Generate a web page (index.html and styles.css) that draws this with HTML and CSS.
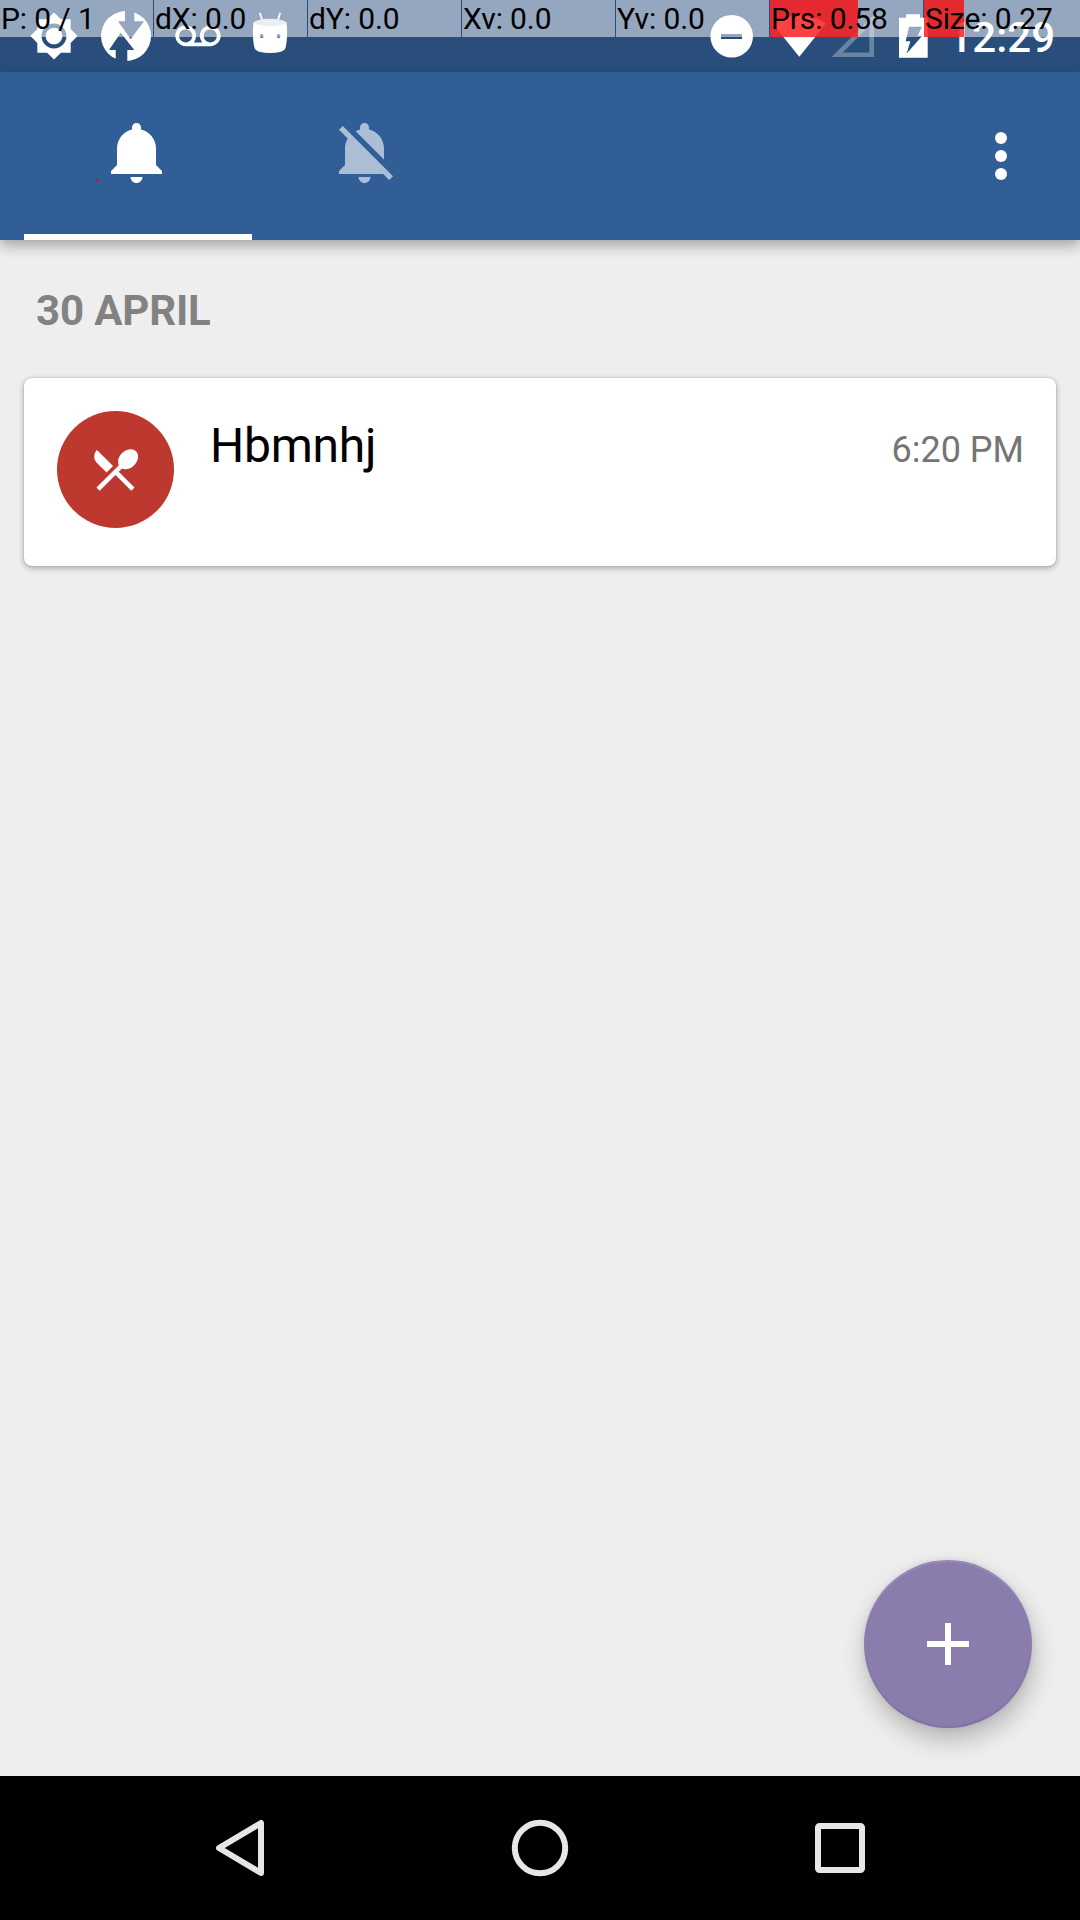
FILE: index.html
```html
<!DOCTYPE html>
<html lang="en">
<head>
<meta charset="utf-8">
<title>Reminders</title>
<link rel="stylesheet" href="styles.css">
</head>
<body>
<div class="screen">
  <header class="status-bar">
    <div class="status-left">
      <svg class="slot" viewBox="-5.280 -5.280 34.560 34.560"><path d="M20 8.690V4h-4.690L12 .69 8.690 4H4v4.690L.69 12 4 15.310V20h4.690L12 23.310 15.310 20H20v-4.690L23.310 12 20 8.690zM12 18c-3.310 0-6-2.690-6-6s2.690-6 6-6 6 2.690 6 6-2.690 6-6 6zm0-10c-2.210 0-4 1.790-4 4s1.790 4 4 4 4-1.790 4-4-1.790-4-4-4z"/></svg>
      <svg class="slot" viewBox="0 0 72 72">
        <circle cx="36" cy="36" r="25"/>
        <g class="cutout"><path d="M35 10h9.300v11.300h9.700L40.700 39 28 21.300h7z"/><path d="M30.700 32.700L44.300 50h-7v12H25.700V50H19z"/></g>
      </svg>
      <svg class="slot" viewBox="-7.050 -7.450 38.100 38.100"><path d="M18.500 6C15.460 6 13 8.460 13 11.500c0 1.330.47 2.550 1.260 3.500H9.740c.79-.95 1.260-2.170 1.260-3.500C11 8.460 8.540 6 5.500 6S0 8.460 0 11.500 2.460 17 5.500 17h13c3.040 0 5.500-2.460 5.500-5.500S21.540 6 18.500 6zm-13 9C3.570 15 2 13.430 2 11.500S3.570 8 5.500 8 9 9.570 9 11.500 7.430 15 5.500 15zm13 0c-1.930 0-3.500-1.570-3.500-3.500S16.570 8 18.500 8 22 9.570 22 11.500 20.430 15 18.500 15z"/></svg>
      <svg class="slot" viewBox="234 0 72 72">
        <path class="antenna" d="M260 13.500l2.500 7.500M280 13.500L277.700 21"/>
        <path d="M253.500 22.500C258 18.500 282 18.500 286.500 22.500C287.600 31 287.200 41 285.500 48Q284.500 51 281 51.800Q270 54.200 259 51.800Q255.500 51 254.500 48C252.800 41 252.400 31 253.500 22.500z"/>
        <ellipse class="lid" cx="270" cy="22.500" rx="15.500" ry="3.700"/>
        <g class="cutout"><circle cx="261.700" cy="36" r="1.900"/><circle cx="278.600" cy="36" r="1.900"/></g>
      </svg>
    </div>
    <div class="status-right">
      <svg width="60" height="72" viewBox="702 0 60 72"><circle cx="731.700" cy="36.300" r="21.300"/><path class="cutout" d="M721 34h21v5h-21z"/></svg>
      <svg width="66" height="72" viewBox="762 0 66 72"><path d="M799.300 56.800L772.500 23.500Q799.300 6.500 826 23.500z"/></svg>
      <svg width="54" height="72" viewBox="828 0 54 72"><path class="no-signal" fill-rule="evenodd" d="M874 14.500V57h-42.500zM869.300 26v26.500h-26.500z"/></svg>
      <svg width="60" height="72" viewBox="882 0 60 72"><path d="M906 14.300h14v3.400h7.700v40H899v-40h7z"/><path class="cutout" d="M909 26.700h13l-4.300 9h4.600L906.700 53.500l3.600-12.200h-4.600z"/></svg>
      <div class="clock">12:29</div>
    </div>
  </header>
  <div class="pointer-overlay">
    <span class="cell">P: 0 / 1</span>
    <span class="cell">dX: 0.0</span>
    <span class="cell">dY: 0.0</span>
    <span class="cell">Xv: 0.0</span>
    <span class="cell">Yv: 0.0</span>
    <span class="cell pressure">Prs: 0.58</span>
    <span class="cell size">Size: 0.27</span>
  </div>
  <nav class="app-bar">
    <div class="tab active"><svg class="icon" viewBox="0 0 24 24"><path d="M11.500 22c1.100 0 2-.9 2-2h-4c0 1.100.9 2 2 2zm6.500-6v-5.500c0-3.070-2.130-5.640-5-6.320V3.500c0-.83-.67-1.500-1.500-1.500S10 2.670 10 3.500v.68c-2.870.68-5 3.250-5 6.320V16l-2 2v1h17v-1l-2-2z"/></svg></div>
    <div class="tab"><svg class="icon" viewBox="0 0 24 24"><path d="M11.500 22c1.100 0 2-.9 2-2h-4c0 1.100.9 2 2 2zM18 10.500c0-3.070-2.130-5.640-5-6.320V3.500c0-.83-.67-1.500-1.500-1.500S10 2.670 10 3.500v.68c-.51.12-.99.32-1.450.56L18 14.180V10.500zm-.27 8.500l2 2L21 19.730 4.270 3 3 4.270l2.920 2.920C5.340 8.160 5 9.290 5 10.500V16l-2 2v1h14.730z"/></svg></div>
    <svg class="icon menu" viewBox="0 0 24 24"><circle cx="12" cy="6" r="2"/><circle cx="12" cy="12" r="2"/><circle cx="12" cy="18" r="2"/></svg>
  </nav>
  <span class="touch-point"></span>
  <main class="content">
    <h2 class="date">30 APRIL</h2>
    <article class="card">
      <div class="avatar"><svg viewBox="0 0 24 24"><path d="M8.100 13.340l2.830-2.830L3.910 3.500c-1.560 1.560-1.560 4.090 0 5.660l4.190 4.180zm6.780-1.810c1.530.71 3.680.21 5.270-1.380 1.910-1.910 2.280-4.650.81-6.120-1.460-1.460-4.200-1.100-6.120.81-1.590 1.590-2.090 3.740-1.380 5.270L3.700 19.870l1.410 1.410L12 14.410l6.880 6.880 1.410-1.410L13.410 13l1.470-1.470z"/></svg></div>
      <div class="title">Hbmnhj</div>
      <time class="time">6:20 PM</time>
    </article>
  </main>
  <button class="fab" aria-label="Add"><svg class="icon" viewBox="0 0 24 24"><path d="M19 13h-6v6h-2v-6H5v-2h6V5h2v6h6v2z"/></svg></button>
  <footer class="nav-bar">
    <svg class="nav-icon" viewBox="0 0 72 72"><path d="M57 11v50L15 36z"/></svg>
    <svg class="nav-icon" viewBox="0 0 72 72"><circle cx="36" cy="36" r="25.200"/></svg>
    <svg class="nav-icon" viewBox="0 0 72 72"><rect x="14" y="14" width="44" height="44" rx="1.500"/></svg>
  </footer>
</div>
</body>
</html>
```
FILE: styles.css
```css
* { box-sizing: border-box; }
body { margin: 0; background: #eee; font-family: Roboto, sans-serif; }
svg { display: block; flex: none; }

.screen { position: relative; width: 1080px; height: 1920px; display: flex; flex-direction: column; overflow: hidden; background: #eee; }

/* System status bar */
.status-bar { height: 72px; flex: none; background: #294e7c; display: flex; justify-content: space-between; fill: #fff; }
.status-left { display: flex; padding-left: 18px; }
.status-right { display: flex; }
.slot { width: 72px; height: 72px; }
.cutout { fill: #294e7c; }
.lid { fill: #d5dae2; }
.antenna { fill: none; stroke: #fff; stroke-width: 1.8px; stroke-linecap: round; }
.no-signal { fill: rgba(255, 255, 255, .3); }
.clock { width: 138px; padding-right: 25px; color: #fff; font-size: 42px; font-weight: 500; line-height: 75px; text-align: right; }

/* Pointer location readout, drawn over the status bar */
.pointer-overlay { position: absolute; top: 0; left: 0; width: 1080px; display: grid; grid-template-columns: repeat(6, 153px) 1fr; column-gap: 1px; }
.cell { height: 37px; padding-left: 1px; background: rgba(255, 255, 255, .5); font-size: 30px; line-height: 37px; letter-spacing: -.12px; color: #000; white-space: nowrap; }
.pressure { background: linear-gradient(rgba(255, 0, 0, .75) 0 0) 0 0 / 88px 100% no-repeat, rgba(255, 255, 255, .5); }
.size { background: linear-gradient(rgba(255, 0, 0, .75) 0 0) 0 0 / 40px 100% no-repeat, rgba(255, 255, 255, .5); }
.touch-point { position: absolute; left: 96px; top: 179px; width: 2px; height: 2px; background: #f00; }

/* App bar with tabs */
.app-bar { height: 168px; flex: none; background: #315e97; display: flex; padding: 0 43px 0 24px; box-shadow: 0 6px 12px rgba(0, 0, 0, .3); }
.tab { width: 228px; display: flex; align-items: center; justify-content: center; border-bottom: 6px solid transparent; }
.tab:not(.active) .icon { opacity: .6; }
.tab.active { border-color: #fff; }
.icon { width: 72px; height: 72px; fill: #fff; }
.menu { margin: auto 0 auto auto; }

/* Reminder list */
.content { flex: 1; padding: 47px 24px 0; }
.date { margin: 0 0 43px 12px; font-size: 42px; line-height: 48px; letter-spacing: -.15px; color: #828282; }
.card { display: flex; height: 188px; padding: 33px; background: #fff; border-radius: 8px; box-shadow: 0 2px 6px rgba(0, 0, 0, .3), 0 0 2px rgba(0, 0, 0, .2); }
.avatar { width: 117px; height: 117px; border-radius: 50%; background: #bd3930; display: grid; place-items: center; }
.avatar svg { width: 55px; height: 55px; fill: #fff; }
.title { margin-left: 36px; font-size: 48px; line-height: 70px; letter-spacing: -.25px; color: #000; }
.time { margin: 0 -1px 0 auto; font-size: 36px; line-height: 78px; color: #757575; }

.fab { position: absolute; right: 48px; bottom: 192px; width: 168px; height: 168px; padding: 0; border: 0; border-radius: 50%; background: #8a7dae; display: grid; place-items: center; box-shadow: 2px 12px 24px rgba(0, 0, 0, .24), 0 0 6px rgba(0, 0, 0, .08), inset 0 2px 2px rgba(255, 255, 255, .12), inset 0 -2px 2px rgba(70, 40, 120, .15); }

/* System navigation bar */
.nav-bar { height: 144px; flex: none; padding: 0 90px; background: #000; display: grid; grid-template-columns: repeat(3, 1fr); place-items: center; }
.nav-icon { width: 72px; height: 72px; fill: none; stroke: #e6e6e6; stroke-width: 6px; stroke-linejoin: round; }
```
